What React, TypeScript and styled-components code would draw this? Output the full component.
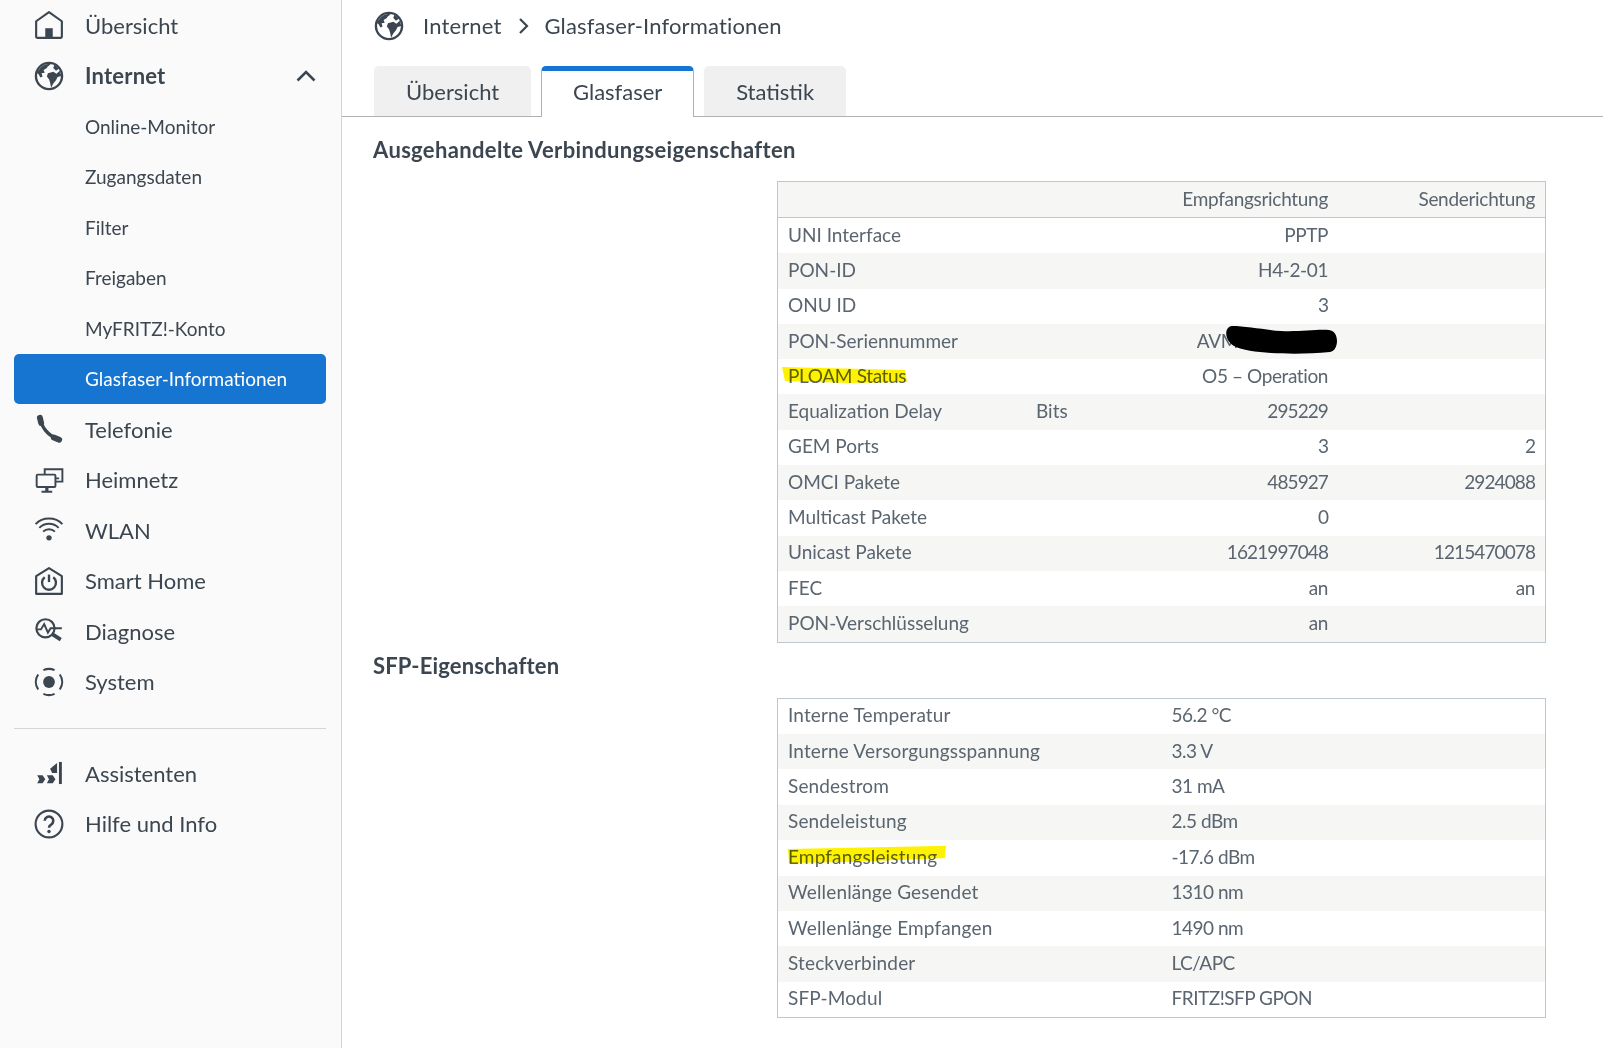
import React from "react"
import styled, { createGlobalStyle } from "styled-components"

const Global = createGlobalStyle`
  html, body { margin: 0; padding: 0; background: #fff; }
  body { font-family: "Lato", "Noto Sans", sans-serif; color: #3c4650; overflow: hidden; }
`

const Page = styled.div`
  display: flex;
  width: 1603px;
  height: 1048px;
  overflow: hidden;
`

const Sidebar = styled.nav`
  width: 342px;
  flex: none;
  box-sizing: border-box;
  background: #fafafa;
  border-right: 1px solid #d4d4d4;
  padding: 0 15px 0 14px;
`

const NavRow = styled.div<{ $active?: boolean; $bold?: boolean; $sub?: boolean }>`
  height: 50.5px;
  display: flex;
  align-items: center;
  gap: 21px;
  padding: 0 10px 0 20px;
  font-size: ${p => (p.$sub ? "19px" : "22px")};
  font-weight: ${p => (p.$bold ? 700 : 400)};
  letter-spacing: ${p => (p.$bold ? "0.2px" : "0")};
  color: ${p => (p.$active ? "#fff" : "#3c4650")};
  background: ${p => (p.$active ? "#1575d0" : "transparent")};
  border-radius: ${p => (p.$active ? "5px" : "0")};
  svg { flex: none; }
`

const NavIndent = styled.span`
  margin-left: 51px;
`

const Chevron = styled.svg`
  margin-left: auto;
`

const NavDivider = styled.hr`
  border: 0;
  border-top: 1px solid #d6d6d6;
  margin: 21px 0 19px;
`

const Main = styled.main`
  flex: 1;
  min-width: 0;
`

const Breadcrumb = styled.div`
  height: 51px;
  display: flex;
  align-items: center;
  gap: 17px;
  padding-left: 32px;
  font-size: 22px;
  letter-spacing: 0.15px;
`

const CrumbLabel = styled.span`
  margin-left: 2px;
`

const CrumbTrail = styled.span`
  margin-left: -3px;
`

const TabBar = styled.div`
  margin-top: 15px;
  height: 50px;
  display: flex;
  align-items: flex-end;
  gap: 10px;
  padding-left: 32px;
  border-bottom: 1px solid #aeb2b6;
`

const Tab = styled.div<{ $active?: boolean }>`
  box-sizing: border-box;
  height: ${p => (p.$active ? "51px" : "50px")};
  margin-bottom: ${p => (p.$active ? "-1px" : "0")};
  width: ${p => (p.$active ? "153px" : "auto")};
  padding: ${p => (p.$active ? "0 32px 5px" : "0 32px")};
  display: flex;
  align-items: center;
  justify-content: center;
  font-size: 22px;
  border-radius: 5px 5px 0 0;
  background: ${p => (p.$active ? "#fff" : "#f0f0f0")};
  border-top: ${p => (p.$active ? "5px solid #1575d0" : "0")};
  border-left: ${p => (p.$active ? "1px solid #aeb2b6" : "0")};
  border-right: ${p => (p.$active ? "1px solid #aeb2b6" : "0")};
`

const Content = styled.div`
  padding: 0 57px 0 32px;
`

const Heading = styled.h2<{ $first?: boolean }>`
  margin: 0 0 0 -1px;
  height: ${p => (p.$first ? "64px" : "55px")};
  padding-top: ${p => (p.$first ? "19px" : "9px")};
  box-sizing: border-box;
  font-size: 22px;
  line-height: 28px;
  font-weight: 700;
  letter-spacing: ${p => (p.$first ? "0.35px" : "0.15px")};
  color: #3c4650;
`

const TableWrap = styled.div`
  margin-left: 403px;
  width: 769px;
`

const DataTable = styled.div`
  border: 1px solid #bcc7d0;
  box-sizing: border-box;
  font-size: 19px;
  color: #5a6570;
`

const Row = styled.div<{ $head?: boolean; $striped?: boolean; $two?: boolean }>`
  box-sizing: border-box;
  display: grid;
  grid-template-columns: ${p => (p.$two ? "383.5px 1fr" : "252px 1fr 207px")};
  align-items: center;
  height: ${p => (p.$head ? "36px" : p.$two ? "35.4px" : "35.3px")};
  padding: 0 10px 3px;
  background: ${p => (p.$striped || p.$head ? "#f6f6f4" : "#fff")};
  border-bottom: ${p => (p.$head ? "1px solid #bcc7d0" : "0")};
`

const Cell = styled.span<{ $right?: boolean; $spacing?: string }>`
  position: relative;
  text-align: ${p => (p.$right ? "right" : "left")};
  letter-spacing: ${p => p.$spacing ?? "0"};
  white-space: nowrap;
`

const UnitCell = styled.span`
  position: absolute;
  left: 248px;
`

const MaskedValue = styled.span`
  padding-right: 90px;
`

const Marker = styled.svg<{ $left: number }>`
  position: absolute;
  left: ${p => p.$left}px;
  top: 0;
  mix-blend-mode: multiply;
  pointer-events: none;
`

const Scribble = styled.svg`
  position: absolute;
  right: -10px;
  top: -4px;
`

const ink = "#3c4650"

const Globe = () => (
  <svg width="30" height="30" viewBox="0 0 28 28">
    <circle cx="14" cy="14" r="12.2" fill="none" stroke={ink} strokeWidth="2.2" />
    <path fill={ink} d="M2.500 11.500c2-4 5-7.500 9-8.500l4-.5c-1 2-3 2-3.500 4l-3 2 1 2.500-3 .5 1 3-2 1-2-3.500zM13 11.500l5-1.500 3 2 3-3 1.500 5-3.500 1-1.500 3-2.500 3-2 4-1-5-1-3-2-2.500zM19 3.500l4.500 3.500-3 2-2.500-2.500z" />
  </svg>
)

const icons: Record<string, React.ReactNode> = {
  home: (
    <svg width="30" height="30" viewBox="0 0 28 28" fill="none" stroke={ink} strokeWidth="2">
      <path d="M2 10.500 14 2l12 8.500V25a1 1 0 0 1-1 1H3a1 1 0 0 1-1-1z" strokeLinejoin="round" />
      <rect x="10.500" y="17" width="7" height="9" fill={ink} stroke="none" />
    </svg>
  ),
  globe: <Globe />,
  phone: (
    <svg width="30" height="30" viewBox="0 0 28 28" fill="none" stroke={ink} strokeLinecap="round">
      <path d="M6 3.500C6.500 12 13 20.500 23 23.500" strokeWidth="3.200" />
      <path d="M5.500 3.500l1.200 5M18.500 22l5 2" strokeWidth="5.500" />
    </svg>
  ),
  net: (
    <svg width="30" height="30" viewBox="0 0 28 28" fill="none" stroke={ink} strokeWidth="1.800">
      <rect x="2.500" y="9" width="17.500" height="11.500" rx="1" />
      <path d="M10 9V4h16.500v11.500H20M20 12.500h3.500M7 25h10" />
      <path d="M12 20.500V25" strokeWidth="3" />
    </svg>
  ),
  wifi: (
    <svg width="30" height="30" viewBox="0 0 28 28" fill="none" stroke={ink} strokeWidth="1.900">
      <path d="M1.500 8.500C8 1.500 20 1.500 26.500 8.500M5 12C10 7 18 7 23 12M8.500 15.500c3-3 8-3 11 0" />
      <circle cx="14" cy="21.300" r="2.500" fill={ink} stroke="none" />
    </svg>
  ),
  smart: (
    <svg width="30" height="30" viewBox="0 0 28 28" fill="none" stroke={ink} strokeWidth="2">
      <path d="M2 9.500 14 2l12 7.500V26H2z" strokeLinejoin="round" />
      <path d="M10 10.500a6.500 6.500 0 1 0 8 0" strokeWidth="2.200" />
      <path d="M14 8v7" strokeWidth="2.200" />
    </svg>
  ),
  diag: (
    <svg width="30" height="30" viewBox="0 0 28 28" fill="none" stroke={ink} strokeWidth="2">
      <circle cx="10.700" cy="11.500" r="8.500" />
      <path d="M2.500 12.500h4l3-5 3.500 8 2.500-4h10.500" strokeWidth="1.800" />
      <path d="M17 17l8 5" strokeWidth="3.500" />
    </svg>
  ),
  system: (
    <svg width="30" height="30" viewBox="0 0 28 28" fill="none" stroke={ink} strokeWidth="2">
      <circle cx="14" cy="14" r="5.500" fill={ink} stroke="none" />
      <path d="M8.800 2.900a12.300 12.300 0 0 1 10.400 0M24.100 7a12.300 12.300 0 0 1 0 14M19.200 25.100a12.300 12.300 0 0 1-10.400 0M3.900 21a12.300 12.300 0 0 1 0-14" />
    </svg>
  ),
  wizard: (
    <svg width="30" height="30" viewBox="0 0 28 28" fill={ink}>
      <path d="M3 16h5l2.500 3.800L8 23.500H3l2-3.700zM12 16h5.500l2.500 3.800-2.500 3.700H12l2-3.700z" />
      <path d="M21.500 4.700V14H17l-2-4z" />
      <rect x="23.300" y="3.700" width="2.700" height="20.600" />
    </svg>
  ),
  help: (
    <svg width="30" height="30" viewBox="0 0 28 28" fill="none" stroke={ink} strokeWidth="2">
      <circle cx="14" cy="14" r="12.500" />
      <path d="M10 11a4 4 0 1 1 6 3.500c-1.500.8-2 1.500-2 3" strokeWidth="2.400" />
      <circle cx="14" cy="21" r="1.600" fill={ink} stroke="none" />
    </svg>
  ),
}

type NavItem = { label: string; icon?: string; bold?: boolean; active?: boolean; open?: boolean }

const navTop: NavItem[] = [
  { label: "Übersicht", icon: "home" },
  { label: "Internet", icon: "globe", bold: true, open: true },
  { label: "Online-Monitor" },
  { label: "Zugangsdaten" },
  { label: "Filter" },
  { label: "Freigaben" },
  { label: "MyFRITZ!-Konto" },
  { label: "Glasfaser-Informationen", active: true },
  { label: "Telefonie", icon: "phone" },
  { label: "Heimnetz", icon: "net" },
  { label: "WLAN", icon: "wifi" },
  { label: "Smart Home", icon: "smart" },
  { label: "Diagnose", icon: "diag" },
  { label: "System", icon: "system" },
]

const navBottom: NavItem[] = [
  { label: "Assistenten", icon: "wizard" },
  { label: "Hilfe und Info", icon: "help" },
]

const Nav = ({ item }: { item: NavItem }) => (
  <NavRow $active={item.active} $bold={item.bold} $sub={!item.icon}>
    {item.icon ? icons[item.icon] : null}
    {item.icon ? <span>{item.label}</span> : <NavIndent>{item.label}</NavIndent>}
    {item.open ? (
      <Chevron width="20" height="12" viewBox="0 0 20 12" fill="none" stroke={ink} strokeWidth="2.600">
        <path d="M1.500 10.500 10 2l8.500 8.500" />
      </Chevron>
    ) : null}
  </NavRow>
)

const negotiated = [
  ["UNI Interface", "", "PPTP", ""],
  ["PON-ID", "", "H4-2-01", ""],
  ["ONU ID", "", "3", ""],
  ["PON-Seriennummer", "", "AVM", ""],
  ["PLOAM Status", "", "O5 – Operation", ""],
  ["Equalization Delay", "Bits", "295229", ""],
  ["GEM Ports", "", "3", "2"],
  ["OMCI Pakete", "", "485927", "2924088"],
  ["Multicast Pakete", "", "0", ""],
  ["Unicast Pakete", "", "1621997048", "1215470078"],
  ["FEC", "", "an", "an"],
  ["PON-Verschlüsselung", "", "an", ""],
]

const sfp = [
  ["Interne Temperatur", "56.2 °C"],
  ["Interne Versorgungsspannung", "3.3 V"],
  ["Sendestrom", "31 mA"],
  ["Sendeleistung", "2.5 dBm"],
  ["Empfangsleistung", "-17.6 dBm"],
  ["Wellenlänge Gesendet", "1310 nm"],
  ["Wellenlänge Empfangen", "1490 nm"],
  ["Steckverbinder", "LC/APC"],
  ["SFP-Modul", "FRITZ!SFP GPON"],
]

const spacingFor = (value: string) => (/^\d+$/.test(value) ? "-0.9px" : "-0.4px")

export default function App(): JSX.Element {
  return (
    <Page>
      <Global />
      <Sidebar>
        {navTop.map(item => <Nav key={item.label} item={item} />)}
        <NavDivider />
        {navBottom.map(item => <Nav key={item.label} item={item} />)}
      </Sidebar>
      <Main>
        <Breadcrumb>
          <Globe />
          <CrumbLabel>Internet</CrumbLabel>
          <svg width="12" height="18" viewBox="0 0 12 18" fill="none" stroke={ink} strokeWidth="2.200">
            <path d="M2 2l7 7-7 7" />
          </svg>
          <CrumbTrail>Glasfaser-Informationen</CrumbTrail>
        </Breadcrumb>
        <TabBar>
          <Tab>Übersicht</Tab>
          <Tab $active>Glasfaser</Tab>
          <Tab>Statistik</Tab>
        </TabBar>
        <Content>
          <Heading $first>Ausgehandelte Verbindungseigenschaften</Heading>
          <TableWrap>
            <DataTable>
              <Row $head>
                <span />
                <Cell $right $spacing="-0.3px">Empfangsrichtung</Cell>
                <Cell $right $spacing="-0.3px">Senderichtung</Cell>
              </Row>
              {negotiated.map((r, i) => (
                <Row key={r[0]} $striped={i % 2 === 1}>
                  <Cell $spacing={r[0] === "PLOAM Status" ? "-0.35px" : "0"}>
                    {r[0] === "PLOAM Status" ? (
                      <Marker $left={-7} width="128" height="22" viewBox="0 0 128 22">
                        <path d="M1 3 124 6l2 12-58 1-64-2z" fill="#fff200" />
                      </Marker>
                    ) : null}
                    {r[0]}
                    {r[1] ? <UnitCell>{r[1]}</UnitCell> : null}
                  </Cell>
                  <Cell $right $spacing={spacingFor(r[2])}>
                    {r[2] === "AVM" ? <MaskedValue>{r[2]}</MaskedValue> : r[2]}
                    {r[2] === "AVM" ? (
                      <Scribble width="112" height="30" viewBox="0 0 112 30">
                        <path d="M6 1C20 1 40 5 55 6c18 1 36-2 48-1 11 1 10 21 1 22-20 2-42 2-59 1C30 27 16 25 8 21-2 15-2 2 6 1z" fill="#000" />
                      </Scribble>
                    ) : null}
                  </Cell>
                  <Cell $right $spacing={spacingFor(r[3])}>{r[3]}</Cell>
                </Row>
              ))}
            </DataTable>
          </TableWrap>
          <Heading>SFP-Eigenschaften</Heading>
          <TableWrap>
            <DataTable>
              {sfp.map((r, i) => (
                <Row key={r[0]} $two $striped={i % 2 === 1}>
                  <Cell $spacing="0.15px">
                    {r[0] === "Empfangsleistung" ? (
                      <Marker $left={0} width="160" height="20" viewBox="0 0 160 20">
                        <path d="M0 4 150 1l8 0-1 12-95 4-61 1z" fill="#fff200" />
                      </Marker>
                    ) : null}
                    {r[0]}
                  </Cell>
                  <Cell $spacing="-0.5px">{r[1]}</Cell>
                </Row>
              ))}
            </DataTable>
          </TableWrap>
        </Content>
      </Main>
    </Page>
  )
}
